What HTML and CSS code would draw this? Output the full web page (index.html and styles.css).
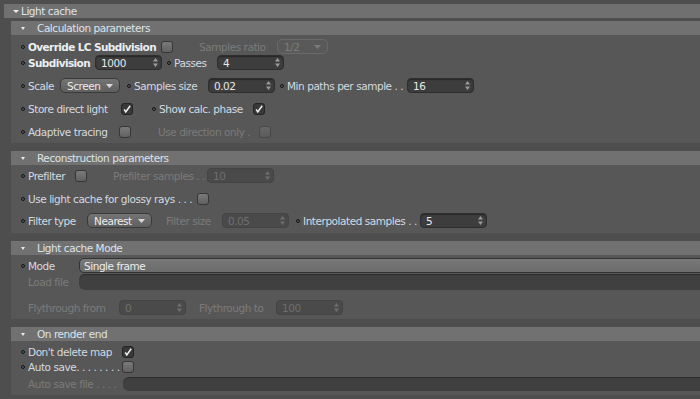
FILE: index.html
```html
<!DOCTYPE html>
<html>
<head>
<meta charset="utf-8">
<title>Light cache</title>
<link rel="stylesheet" href="styles.css">
</head>
<body>
<div class="root">
  <div class="main-head"><span class="tri"></span>Light cache</div>
  <div class="sections">

    <section class="sec">
      <div class="sec-head"><span class="tri"></span>Calculation parameters</div>
      <div class="panel p-calc">
        <div class="row">
          <span class="dot"></span><span class="lbl b w133">Override LC Subdivision</span><span class="chk"></span>
          <span class="dot off ml19"></span><span class="lbl dim w78">Samples ratio</span>
          <span class="drop dis w51"><span>1/2</span><svg width="7" height="4" viewBox="0 0 7 4"><path d="M0 0H7L3.5 4Z" fill="#7a7a7a"/></svg></span>
        </div>
        <div class="row mt1">
          <span class="dot"></span><span class="lbl b w67">Subdivision</span>
          <span class="field"><span>1000</span><svg width="5" height="9" viewBox="0 0 5 9"><path d="M2.5 0L5 3.5H0ZM2.5 9L5 5.5H0Z" fill="#9c9c9c"/></svg></span>
          <span class="dot ml5"></span><span class="lbl w43">Passes</span>
          <span class="field"><span>4</span><svg width="5" height="9" viewBox="0 0 5 9"><path d="M2.5 0L5 3.5H0ZM2.5 9L5 5.5H0Z" fill="#9c9c9c"/></svg></span>
        </div>
        <div class="row mt8">
          <span class="dot"></span><span class="lbl w32">Scale</span>
          <span class="drop w60"><span>Screen</span><svg width="7" height="4" viewBox="0 0 7 4"><path d="M0 0H7L3.5 4Z" fill="#d8d8d8"/></svg></span>
          <span class="dot ml7"></span><span class="lbl w74">Samples size</span>
          <span class="field"><span>0.02</span><svg width="5" height="9" viewBox="0 0 5 9"><path d="M2.5 0L5 3.5H0ZM2.5 9L5 5.5H0Z" fill="#9c9c9c"/></svg></span>
          <span class="dot ml5"></span><span class="lbl w120">Min paths per sample . .</span>
          <span class="field"><span>16</span><svg width="5" height="9" viewBox="0 0 5 9"><path d="M2.5 0L5 3.5H0ZM2.5 9L5 5.5H0Z" fill="#9c9c9c"/></svg></span>
        </div>
        <div class="row mt8">
          <span class="dot"></span><span class="lbl w93">Store direct light</span>
          <span class="chk on"><svg width="10" height="10" viewBox="0 0 10 10"><path d="M2.2 5.4L3.8 8L8.2 1.8" fill="none" stroke="#f2f2f2" stroke-width="1.5"/></svg></span>
          <span class="dot ml19"></span><span class="lbl w94">Show calc. phase</span>
          <span class="chk on"><svg width="10" height="10" viewBox="0 0 10 10"><path d="M2.2 5.4L3.8 8L8.2 1.8" fill="none" stroke="#f2f2f2" stroke-width="1.5"/></svg></span>
        </div>
        <div class="row mt8">
          <span class="dot"></span><span class="lbl w91">Adaptive tracing</span><span class="chk"></span>
          <span class="dot off ml20"></span><span class="lbl dim w101">Use direction only .</span><span class="chk dis"></span>
        </div>
      </div>
    </section>

    <section class="sec">
      <div class="sec-head"><span class="tri"></span>Reconstruction parameters</div>
      <div class="panel p-recon">
        <div class="row">
          <span class="dot"></span><span class="lbl w47">Prefilter</span><span class="chk"></span>
          <span class="dot off ml19"></span><span class="lbl dim w94">Prefilter samples . .</span>
          <span class="field dis"><span>10</span><svg width="5" height="9" viewBox="0 0 5 9"><path d="M2.5 0L5 3.5H0ZM2.5 9L5 5.5H0Z" fill="#6e6e6e"/></svg></span>
        </div>
        <div class="row mt8">
          <span class="dot"></span><span class="lbl w169">Use light cache for glossy rays . . .</span><span class="chk"></span>
        </div>
        <div class="row mt7">
          <span class="dot"></span><span class="lbl w59">Filter type</span>
          <span class="drop w65"><span>Nearest</span><svg width="7" height="4" viewBox="0 0 7 4"><path d="M0 0H7L3.5 4Z" fill="#d8d8d8"/></svg></span>
          <span class="dot off ml7"></span><span class="lbl dim w56">Filter size</span>
          <span class="field dis"><span>0.05</span><svg width="5" height="9" viewBox="0 0 5 9"><path d="M2.5 0L5 3.5H0ZM2.5 9L5 5.5H0Z" fill="#6e6e6e"/></svg></span>
          <span class="dot ml7"></span><span class="lbl w117">Interpolated samples . .</span>
          <span class="field"><span>5</span><svg width="5" height="9" viewBox="0 0 5 9"><path d="M2.5 0L5 3.5H0ZM2.5 9L5 5.5H0Z" fill="#9c9c9c"/></svg></span>
        </div>
      </div>
    </section>

    <section class="sec">
      <div class="sec-head"><span class="tri"></span>Light cache Mode</div>
      <div class="panel p-mode">
        <div class="row">
          <span class="dot"></span><span class="lbl w51">Mode</span>
          <span class="drop wide"><span>Single frame</span></span>
        </div>
        <div class="row tall mt1">
          <span class="dot off"></span><span class="lbl dim w51">Load file</span>
          <span class="path"></span>
        </div>
        <div class="row mt10">
          <span class="dot off"></span><span class="lbl dim w91">Flythrough from</span>
          <span class="field dis"><span>0</span><svg width="5" height="9" viewBox="0 0 5 9"><path d="M2.5 0L5 3.5H0ZM2.5 9L5 5.5H0Z" fill="#6e6e6e"/></svg></span>
          <span class="dot off ml6"></span><span class="lbl dim w77">Flythrough to</span>
          <span class="field dis"><span>100</span><svg width="5" height="9" viewBox="0 0 5 9"><path d="M2.5 0L5 3.5H0ZM2.5 9L5 5.5H0Z" fill="#6e6e6e"/></svg></span>
        </div>
      </div>
    </section>

    <section class="sec">
      <div class="sec-head"><span class="tri"></span>On render end</div>
      <div class="panel p-end">
        <div class="row short">
          <span class="dot"></span><span class="lbl w94">Don't delete map</span>
          <span class="chk on"><svg width="10" height="10" viewBox="0 0 10 10"><path d="M2.2 5.4L3.8 8L8.2 1.8" fill="none" stroke="#f2f2f2" stroke-width="1.5"/></svg></span>
        </div>
        <div class="row short mt1">
          <span class="dot"></span><span class="lbl w94">Auto save. . . . . . . .</span><span class="chk"></span>
        </div>
        <div class="row short mt3">
          <span class="dot off"></span><span class="lbl dim w95">Auto save file . . . .</span>
          <span class="path"></span>
        </div>
      </div>
    </section>

  </div>
</div>
</body>
</html>
```

FILE: styles.css
```css
* { box-sizing: border-box; }
html, body { margin: 0; height: 100%; }
body {
  background: #4e4e4e;
  font-family: "DejaVu Sans", "Liberation Sans", sans-serif;
  font-size: 10.5px;
  letter-spacing: -0.45px;
  color: #d5dae0;
  overflow: hidden;
}
.root { padding: 4px 0 0 4px; }

.main-head {
  height: 14px;
  background: #707070;
  display: flex;
  align-items: center;
  padding-left: 9px;
  color: #dde3ea;
}
.main-head .tri {
  width: 0; height: 0;
  border-left: 3.5px solid transparent;
  border-right: 3.5px solid transparent;
  border-top: 3px solid #ececec;
  margin-right: 2px;
}

.sections {
  margin: 3px 0 0 7px;
  display: flex;
  flex-direction: column;
  gap: 8px;
}
.sec-head {
  height: 14px;
  background: #717171;
  display: flex;
  align-items: center;
  padding-left: 10px;
  color: #dde3ea;
}
.sec-head .tri {
  width: 0; height: 0;
  border-left: 2.5px solid transparent;
  border-right: 2.5px solid transparent;
  border-top: 3px solid #ececec;
  margin-right: 12px;
}

.panel {
  background: #575757;
  padding: 4px 0 4px 10px;
  display: flex;
  flex-direction: column;
  overflow: hidden;
}
.p-recon { padding-top: 3px; padding-bottom: 5px; }
.p-mode { padding-top: 3px; padding-bottom: 4px; }

.row {
  display: flex;
  align-items: center;
  height: 15px;
  white-space: nowrap;
}
.row.tall { height: 16px; }
.row.short { height: 14px; }
.mt1 { margin-top: 1px; }
.mt3 { margin-top: 3px; }
.mt7 { margin-top: 7px; }
.mt8 { margin-top: 8px; }
.mt10 { margin-top: 10px; }

.dot {
  flex: none;
  width: 4px; height: 4px;
  border: 1px solid #141414;
  border-radius: 50%;
  margin-right: 3px;
}
.dot.off { visibility: hidden; }
.ml5 { margin-left: 5px; }
.ml6 { margin-left: 6px; }
.ml7 { margin-left: 7px; }
.ml19 { margin-left: 19px; }
.ml20 { margin-left: 20px; }

.lbl { flex: none; }
.b { font-weight: bold; color: #eceff2; letter-spacing: -0.6px; }
.dim { color: #7b7b7b; }
.w32 { width: 32px; } .w43 { width: 43px; } .w47 { width: 47px; }
.w51 { width: 51px; } .w56 { width: 56px; } .w59 { width: 59px; }
.w60 { width: 60px; } .w65 { width: 65px; } .w67 { width: 67px; }
.w74 { width: 74px; } .w77 { width: 77px; } .w78 { width: 78px; }
.w91 { width: 91px; } .w93 { width: 93px; } .w94 { width: 94px; }
.w95 { width: 95px; } .w101 { width: 101px; } .w117 { width: 117px; }
.w120 { width: 120px; } .w133 { width: 133px; } .w169 { width: 169px; }

.chk {
  flex: none;
  width: 12px; height: 12px;
  border-radius: 3px;
  border: 1px solid #363636;
  background: linear-gradient(#7a7a7a, #616161);
  display: flex;
  align-items: center;
  justify-content: center;
}
.chk.on { background: #383838; border-color: #242424; }
.chk.dis { background: linear-gradient(#676767, #5b5b5b); border-color: #484848; }

.field {
  flex: none;
  width: 67px; height: 15px;
  border-radius: 4px;
  background: #3d3d3d;
  border: 1px solid #2e2e2e;
  box-shadow: inset 0 1px 1px rgba(0,0,0,.35);
  display: flex;
  align-items: center;
  justify-content: space-between;
  padding: 0 3px 0 5px;
  color: #e8e8e8;
}
.field.dis {
  background: #4a4a4a;
  border-color: #444;
  box-shadow: none;
  color: #6f6f6f;
}

.drop {
  flex: none;
  height: 15px;
  border-radius: 5px;
  border: 1px solid #3a3a3a;
  background: linear-gradient(#747474, #5f5f5f);
  color: #ececec;
  display: flex;
  align-items: center;
  justify-content: space-between;
  padding: 0 6px 0 6px;
}
.drop.dis {
  background: #595959;
  border-color: #6a6a6a;
  color: #7c7c7c;
}
.drop.wide {
  flex: 1;
  margin-right: -10px;
  background: linear-gradient(#787878, #6c6c6c);
  border-color: #333;
  padding-left: 4px;
}

.path {
  flex: 1;
  height: 16px;
  margin-right: -10px;
  border-radius: 6px 0 0 6px;
  background: #404040;
  box-shadow: inset 0 1px 1px rgba(0,0,0,.3);
}
.row.short .path { height: 14px; }
```
